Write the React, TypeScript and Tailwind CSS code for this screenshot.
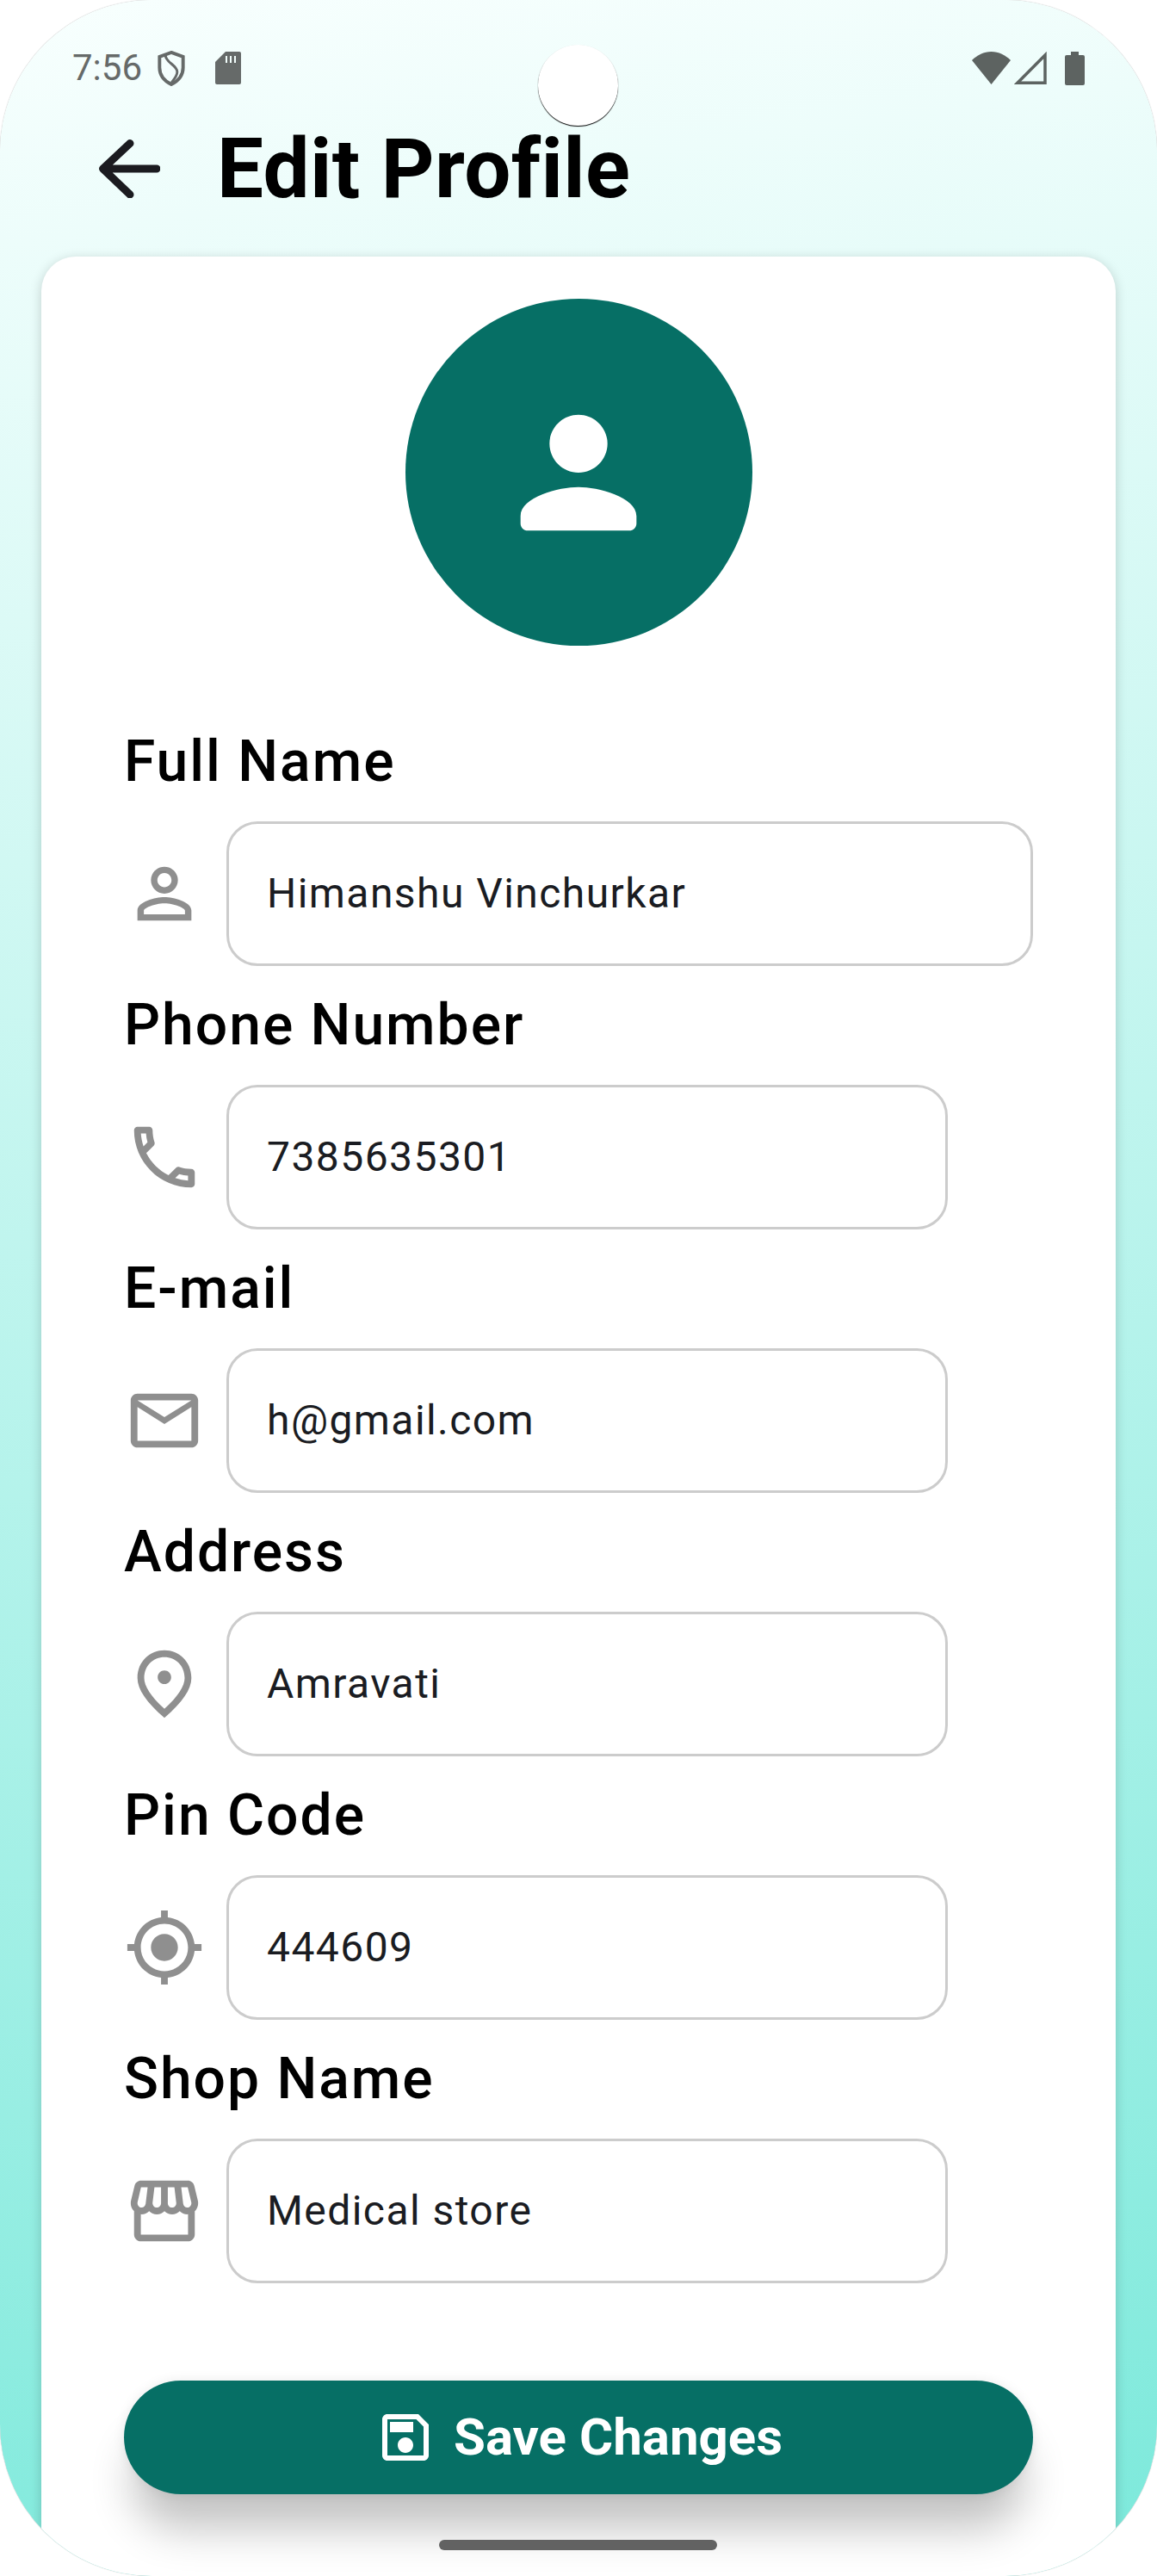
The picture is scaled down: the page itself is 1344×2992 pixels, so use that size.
const FONT = 'font-["Roboto",sans-serif]'

/* ── Material icon paths ───────────────────────────────────────────────────── */

const icons = {
  person: 'M12 5.9c1.16 0 2.1.94 2.1 2.1s-.94 2.1-2.1 2.1S9.9 9.16 9.9 8s.94-2.1 2.1-2.1m0 9c2.97 0 6.1 1.46 6.1 2.1v1.1H5.9V17c0-.64 3.13-2.1 6.1-2.1M12 4C9.79 4 8 5.79 8 8s1.79 4 4 4 4-1.79 4-4-1.79-4-4-4zm0 9c-2.67 0-8 1.34-8 4v3h16v-3c0-2.66-5.33-4-8-4z',
  phone: 'M6.54 5c.06.89.21 1.76.45 2.59l-1.2 1.2c-.41-1.2-.67-2.47-.76-3.79h1.51m9.86 12.02c.85.24 1.72.39 2.6.45v1.49c-1.32-.09-2.59-.35-3.8-.75l1.2-1.19M7.5 3H4c-.55 0-1 .45-1 1 0 9.39 7.61 17 17 17 .55 0 1-.45 1-1v-3.49c0-.55-.45-1-1-1-1.24 0-2.45-.2-3.57-.57-.1-.04-.21-.05-.31-.05-.26 0-.51.1-.71.29l-2.2 2.2c-2.83-1.45-5.15-3.76-6.59-6.59l2.2-2.2c.28-.28.36-.67.25-1.02C8.7 6.45 8.5 5.25 8.5 4c0-.55-.45-1-1-1z',
  mail: 'M22 6c0-1.1-.9-2-2-2H4c-1.1 0-2 .9-2 2v12c0 1.1.9 2 2 2h16c1.1 0 2-.9 2-2V6zm-2 0l-8 5-8-5h16zm0 12H4V8l8 5 8-5v10z',
  place: 'M12 12c-1.1 0-2-.9-2-2s.9-2 2-2 2 .9 2 2-.9 2-2 2zm6-1.8C18 6.57 15.35 4 12 4s-6 2.57-6 6.2c0 2.34 1.95 5.44 6 9.14 4.05-3.7 6-6.8 6-9.14zM12 2c4.2 0 8 3.22 8 8.2 0 3.32-2.67 7.25-8 11.8-5.33-4.55-8-8.48-8-11.8C4 5.22 7.8 2 12 2z',
  location: 'M12 8c-2.21 0-4 1.79-4 4s1.79 4 4 4 4-1.79 4-4-1.79-4-4-4zm8.94 3c-.46-4.17-3.77-7.48-7.94-7.94V1h-2v2.06C6.83 3.52 3.52 6.83 3.06 11H1v2h2.06c.46 4.17 3.77 7.48 7.94 7.94V23h2v-2.06c4.17-.46 7.48-3.77 7.94-7.94H23v-2h-2.06zM12 19c-3.87 0-7-3.13-7-7s3.13-7 7-7 7 3.13 7 7-3.13 7-7 7z',
  store: 'M21.9 8.89l-1.05-4.37c-.22-.9-1-1.52-1.91-1.52H5.05c-.9 0-1.69.63-1.9 1.52L2.1 8.89c-.24 1.02-.02 2.06.62 2.88.08.11.19.19.28.29V19c0 1.1.9 2 2 2h14c1.1 0 2-.9 2-2v-6.94c.09-.09.2-.18.28-.28.64-.82.87-1.87.62-2.89zm-2.99-3.9l1.05 4.37c.1.42.01.84-.25 1.17-.14.18-.44.47-.94.47-.61 0-1.14-.49-1.21-1.14L16.98 5l1.93-.01zM13 5h1.96l.54 4.52c.05.39-.07.78-.33 1.07-.22.26-.54.41-.95.41-.67 0-1.22-.59-1.22-1.31V5zM8.49 9.52L9.04 5H11v4.69c0 .72-.55 1.31-1.29 1.31-.34 0-.65-.15-.89-.41-.25-.29-.37-.68-.33-1.07zm-4.45-.16L5.05 5h1.97l-.58 4.86c-.08.65-.6 1.14-1.21 1.14-.49 0-.8-.29-.93-.47-.27-.32-.36-.75-.26-1.17zM5 19v-6.03c.08.01.15.03.23.03.87 0 1.66-.36 2.24-.95.6.6 1.4.95 2.31.95.87 0 1.65-.36 2.23-.93.59.57 1.39.93 2.29.93.84 0 1.64-.35 2.24-.95.58.59 1.37.95 2.24.95.08 0 .15-.02.23-.03V19H5z',
  save: 'M17 3H5c-1.11 0-2 .9-2 2v14c0 1.1.89 2 2 2h14c1.1 0 2-.9 2-2V7l-4-4zm2 16H5V5h11.17L19 7.83V19zm-7-7c-1.66 0-3 1.34-3 3s1.34 3 3 3 3-1.34 3-3-1.34-3-3-3zM6 6h9v4H6z',
  avatar: 'M12 12c2.21 0 4-1.79 4-4s-1.79-4-4-4-4 1.79-4 4 1.79 4 4 4zm0 2c-2.67 0-8 1.34-8 4v1c0 .55.45 1 1 1h14c.55 0 1-.45 1-1v-1c0-2.66-5.33-4-8-4z',
}

function Icon({ d, className }: { d: string; className: string }) {
  return (
    <svg viewBox="0 0 24 24" fill="currentColor" className={className}>
      <path d={d} />
    </svg>
  )
}

const fields = [
  { label: 'Full Name', value: 'Himanshu Vinchurkar', icon: icons.person, wide: true },
  { label: 'Phone Number', value: '7385635301', icon: icons.phone, wide: false },
  { label: 'E-mail', value: 'h@gmail.com', icon: icons.mail, wide: false },
  { label: 'Address', value: 'Amravati', icon: icons.place, wide: false },
  { label: 'Pin Code', value: '444609', icon: icons.location, wide: false },
  { label: 'Shop Name', value: 'Medical store', icon: icons.store, wide: false },
]

/* ── Status bar ────────────────────────────────────────────────────────────── */

function StatusBar() {
  return (
    <div className="h-[116px] pt-[54px] pl-[84px] pr-[84px] flex items-start justify-between">
      <div className="flex items-center h-[50px]">
        <span className="text-[42px] leading-[50px] text-[#666a69] w-[99px]">7:56</span>
        <svg viewBox="0 0 32 42" className="w-[32px] h-[41px] text-[#666a69]" fill="none" stroke="currentColor" strokeWidth="4">
          <path d="M16 2 30 7v13c0 9-6 16-14 20C8 36 2 29 2 20V7z" />
          <path d="M9 5c0 9 14 12 14 20 0 5-4 9-7 13" strokeWidth="3" />
        </svg>
        <svg viewBox="0 0 30 38" className="ml-[35px] w-[30px] h-[38px] text-[#666a69]" fill="currentColor">
          <path d="M12 0h16a2 2 0 0 1 2 2v34a2 2 0 0 1-2 2H2a2 2 0 0 1-2-2V12z" />
          <path d="M12 5h2v8h-2zM17 5h2v8h-2zM22 5h2v8h-2z" fill="#f2fdfb" />
        </svg>
      </div>
      <div className="flex items-center h-[50px]">
        <svg viewBox="0 0 45 38" className="w-[45px] h-[38px] text-[#5d6361]" fill="currentColor">
          <path d="M22.5 38 0 10C6 4 14 0 22.5 0S39 4 45 10z" />
        </svg>
        <svg viewBox="0 0 38 38" className="ml-[4px] w-[38px] h-[38px] text-[#5d6361]" fill="none" stroke="currentColor" strokeWidth="3.5">
          <path d="M36 4v32.300H4z" />
        </svg>
        <svg viewBox="0 0 23 39" className="ml-[21px] w-[23px] h-[39px] text-[#5d6361]" fill="currentColor">
          <path d="M7 0h9v4h5a2 2 0 0 1 2 2v31a2 2 0 0 1-2 2H2a2 2 0 0 1-2-2V6a2 2 0 0 1 2-2h5z" />
        </svg>
      </div>
    </div>
  )
}

/* ── Form row ──────────────────────────────────────────────────────────────── */

function Field({ label, value, icon, wide }: { label: string; value: string; icon: string; wide: boolean }) {
  return (
    <div>
      <div className="h-[138px] flex items-center text-[66px] leading-none font-medium tracking-[0.03em] text-black">
        {label}
      </div>
      <div className="flex items-center">
        <Icon d={icon} className="w-[94px] h-[94px] text-[#8f8f8f] shrink-0" />
        <div
          className={`ml-[25px] h-[168px] rounded-[36px] border-[3px] border-[#cccccc] pl-[44px] flex items-center text-[48px] tracking-[0.03em] text-[#1a1c22] ${wide ? 'w-[937px]' : 'w-[838px]'}`}
        >
          {value}
        </div>
      </div>
    </div>
  )
}

export default function App() {
  return (
    <div className={`${FONT} relative w-[1344px] h-[2992px] overflow-hidden rounded-[176px] flex flex-col bg-[linear-gradient(172deg,#f8fffe_0%,#7ce9db_100%)] shadow-[0_0_1px_rgba(0,0,0,0.5)]`}>
      <StatusBar />

      {/* Camera cut-out */}
      <div className="absolute left-[625px] top-[52px] w-[93px] h-[94px] rounded-full bg-white shadow-[0_1px_1px_#000]" />

      {/* Header */}
      <div className="h-[182px] pl-[115px] pb-[22px] flex items-center">
        <svg viewBox="0 0 71 68" className="w-[71px] h-[68px] text-[#1b1b20]" fill="none" stroke="currentColor" strokeWidth="9" strokeLinecap="round" strokeLinejoin="round">
          <path d="M67 34H5M36 4.500 4.500 34 36 64" />
        </svg>
        <h1 className="ml-[66px] text-[96px] leading-none font-bold tracking-[0.004em] text-black">Edit Profile</h1>
      </div>

      {/* Card */}
      <div className="mx-[48px] flex-1 rounded-t-[40px] bg-white shadow-[0_3px_14px_rgba(0,0,0,0.18)] pt-[49px] px-[96px]">
        <div className="mx-auto w-[403px] h-[403px] rounded-full bg-[#066f65] text-white flex items-center justify-center">
          <Icon d={icons.avatar} className="w-[202px] h-[202px]" />
        </div>

        <div className="mt-[66px]">
          {fields.map((field) => (
            <Field key={field.label} {...field} />
          ))}
        </div>

        <button
          type="button"
          className="mt-[113px] w-[1056px] h-[132px] rounded-full bg-[#066f65] text-white flex items-center justify-center shadow-[0_50px_50px_-10px_rgba(0,0,0,0.24),0_0_14px_rgba(0,0,0,0.08)]"
        >
          <Icon d={icons.save} className="w-[72px] h-[72px]" />
          <span className="ml-[20px] text-[60px] leading-none font-bold">Save Changes</span>
        </button>
      </div>

      {/* Home indicator */}
      <div className="absolute left-[510px] top-[2950px] w-[323px] h-[12px] rounded-full bg-[#626262]" />
    </div>
  )
}
